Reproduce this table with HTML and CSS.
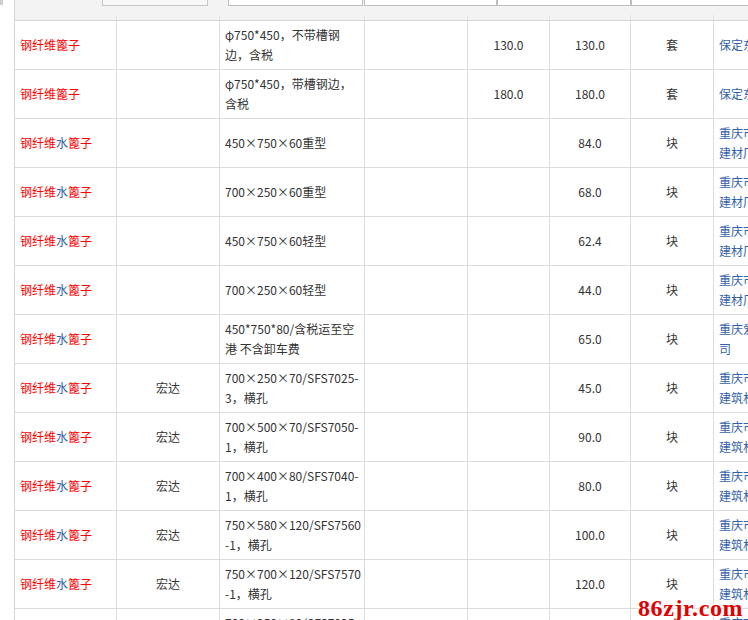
FILE: index.html
```html
<!DOCTYPE html>
<html lang="zh-CN">
<head>
<meta charset="utf-8">
<title>钢纤维篦子价格</title>
<link rel="stylesheet" href="styles.css">
</head>
<body>
<div class="page">
  <div class="gutter"><span class="nub"></span></div>
  <div class="sheet">
    <div class="toolbar">
      <div class="fields">
        <span class="btn"></span>
        <span class="field f1"></span>
        <span class="field f2"></span>
        <span class="field f3"></span>
        <span class="field f4"></span>
      </div>
      <div class="ticks cols">
        <span></span><span></span><span></span><span></span><span></span><span></span><span></span><span></span>
      </div>
    </div>
    <div class="rows cols">
      <div class="cell"><span class="name">钢纤维篦子</span></div>
      <div class="cell c"><span></span></div>
      <div class="cell spec"><span>φ750*450，不带槽钢<br>边，含税</span></div>
      <div class="cell"><span></span></div>
      <div class="cell c"><span>130.0</span></div>
      <div class="cell c"><span>130.0</span></div>
      <div class="cell c"><span>套</span></div>
      <div class="cell"><span class="link">保定东方建材有限公司</span></div>

      <div class="cell"><span class="name">钢纤维篦子</span></div>
      <div class="cell c"><span></span></div>
      <div class="cell spec"><span>φ750*450，带槽钢边，<br>含税</span></div>
      <div class="cell"><span></span></div>
      <div class="cell c"><span>180.0</span></div>
      <div class="cell c"><span>180.0</span></div>
      <div class="cell c"><span>套</span></div>
      <div class="cell"><span class="link">保定东方建材有限公司</span></div>

      <div class="cell"><span class="name">钢纤维<em class="blue">水</em>篦子</span></div>
      <div class="cell c"><span></span></div>
      <div class="cell spec"><span>450×750×60重型</span></div>
      <div class="cell"><span></span></div>
      <div class="cell c"><span></span></div>
      <div class="cell c"><span>84.0</span></div>
      <div class="cell c"><span>块</span></div>
      <div class="cell"><span class="link">重庆市沙坪坝区鑫源达建材厂</span></div>

      <div class="cell"><span class="name">钢纤维<em class="blue">水</em>篦子</span></div>
      <div class="cell c"><span></span></div>
      <div class="cell spec"><span>700×250×60重型</span></div>
      <div class="cell"><span></span></div>
      <div class="cell c"><span></span></div>
      <div class="cell c"><span>68.0</span></div>
      <div class="cell c"><span>块</span></div>
      <div class="cell"><span class="link">重庆市沙坪坝区鑫源达建材厂</span></div>

      <div class="cell"><span class="name">钢纤维<em class="blue">水</em>篦子</span></div>
      <div class="cell c"><span></span></div>
      <div class="cell spec"><span>450×750×60轻型</span></div>
      <div class="cell"><span></span></div>
      <div class="cell c"><span></span></div>
      <div class="cell c"><span>62.4</span></div>
      <div class="cell c"><span>块</span></div>
      <div class="cell"><span class="link">重庆市沙坪坝区鑫源达建材厂</span></div>

      <div class="cell"><span class="name">钢纤维<em class="blue">水</em>篦子</span></div>
      <div class="cell c"><span></span></div>
      <div class="cell spec"><span>700×250×60轻型</span></div>
      <div class="cell"><span></span></div>
      <div class="cell c"><span></span></div>
      <div class="cell c"><span>44.0</span></div>
      <div class="cell c"><span>块</span></div>
      <div class="cell"><span class="link">重庆市沙坪坝区鑫源达建材厂</span></div>

      <div class="cell"><span class="name">钢纤维<em class="blue">水</em>篦子</span></div>
      <div class="cell c"><span></span></div>
      <div class="cell spec"><span>450*750*80/含税运至空<br>港 不含卸车费</span></div>
      <div class="cell"><span></span></div>
      <div class="cell c"><span></span></div>
      <div class="cell c"><span>65.0</span></div>
      <div class="cell c"><span>块</span></div>
      <div class="cell"><span class="link">重庆爱思特建材有限公司</span></div>

      <div class="cell"><span class="name">钢纤维<em class="blue">水</em>篦子</span></div>
      <div class="cell c"><span>宏达</span></div>
      <div class="cell spec"><span>700×250×70/SFS7025-<br>3，横孔</span></div>
      <div class="cell"><span></span></div>
      <div class="cell c"><span></span></div>
      <div class="cell c"><span>45.0</span></div>
      <div class="cell c"><span>块</span></div>
      <div class="cell"><span class="link">重庆市璧山区宏达新型建筑材料有限公司</span></div>

      <div class="cell"><span class="name">钢纤维<em class="blue">水</em>篦子</span></div>
      <div class="cell c"><span>宏达</span></div>
      <div class="cell spec"><span>700×500×70/SFS7050-<br>1，横孔</span></div>
      <div class="cell"><span></span></div>
      <div class="cell c"><span></span></div>
      <div class="cell c"><span>90.0</span></div>
      <div class="cell c"><span>块</span></div>
      <div class="cell"><span class="link">重庆市璧山区宏达新型建筑材料有限公司</span></div>

      <div class="cell"><span class="name">钢纤维<em class="blue">水</em>篦子</span></div>
      <div class="cell c"><span>宏达</span></div>
      <div class="cell spec"><span>700×400×80/SFS7040-<br>1，横孔</span></div>
      <div class="cell"><span></span></div>
      <div class="cell c"><span></span></div>
      <div class="cell c"><span>80.0</span></div>
      <div class="cell c"><span>块</span></div>
      <div class="cell"><span class="link">重庆市璧山区宏达新型建筑材料有限公司</span></div>

      <div class="cell"><span class="name">钢纤维<em class="blue">水</em>篦子</span></div>
      <div class="cell c"><span>宏达</span></div>
      <div class="cell spec"><span>750×580×120/SFS7560<br>-1，横孔</span></div>
      <div class="cell"><span></span></div>
      <div class="cell c"><span></span></div>
      <div class="cell c"><span>100.0</span></div>
      <div class="cell c"><span>块</span></div>
      <div class="cell"><span class="link">重庆市璧山区宏达新型建筑材料有限公司</span></div>

      <div class="cell"><span class="name">钢纤维<em class="blue">水</em>篦子</span></div>
      <div class="cell c"><span>宏达</span></div>
      <div class="cell spec"><span>750×700×120/SFS7570<br>-1，横孔</span></div>
      <div class="cell"><span></span></div>
      <div class="cell c"><span></span></div>
      <div class="cell c"><span>120.0</span></div>
      <div class="cell c"><span>块</span></div>
      <div class="cell"><span class="link">重庆市璧山区宏达新型建筑材料有限公司</span></div>

      <div class="cell"><span class="name">钢纤维<em class="blue">水</em>篦子</span></div>
      <div class="cell c"><span>宏达</span></div>
      <div class="cell spec"><span>700×250×80/SFS7025-<br>2，横孔</span></div>
      <div class="cell"><span></span></div>
      <div class="cell c"><span></span></div>
      <div class="cell c"><span>50.0</span></div>
      <div class="cell c"><span>块</span></div>
      <div class="cell"><span class="link">重庆市璧山区宏达新型建筑材料有限公司</span></div>
    </div>
  </div>
</div>
<div class="watermark">86zjr.com</div>
</body>
</html>
```

FILE: styles.css
```css
html {
  overflow: hidden;
}

body {
  margin: 0;
  font-family: "Noto Sans CJK SC", sans-serif;
  font-size: 12px;
  line-height: 20px;
  color: #333;
  background: #fff;
}

.page {
  display: flex;
  width: 900px;
}

.gutter {
  flex: none;
  width: 14px;
}

.nub {
  display: block;
  width: 3px;
  height: 5px;
  background: #cfcfcf;
}

.sheet {
  flex: none;
  border-left: 1px solid #d6d6d6;
}

.cols {
  display: grid;
  grid-template-columns: 102px 103px 145px 103px 82px 81px 83px 140px;
}

.toolbar {
  height: 20px;
  background: #f3f3f3;
  border-bottom: 1px solid #d6d6d6;
}

.fields {
  display: flex;
  align-items: flex-start;
  height: 15px;
  padding-left: 87px;
}

.btn {
  width: 104px;
  height: 5px;
  background: #f8f8f8;
  border: 1px solid #c6c6c6;
  border-top: 0;
}

.field {
  height: 5px;
  background: #fff;
  border: 1px solid #bdbdbd;
  border-top: 0;
}

.f1 {
  width: 133px;
  margin-left: 20px;
}

.f2 {
  width: 131px;
  margin-left: 1px;
}

.f3 {
  width: 132px;
}

.f4 {
  width: 200px;
}

.ticks {
  height: 5px;
}

.ticks span {
  border-right: 1px solid #e2e2e2;
}

.cell {
  box-sizing: border-box;
  height: 49px;
  padding: 4px 5px;
  border-right: 1px solid #dcdcdc;
  border-bottom: 1px solid #dcdcdc;
  display: flex;
  align-items: center;
  overflow: hidden;
}

.c {
  justify-content: center;
}

.spec {
  white-space: nowrap;
}

.name {
  color: #f00;
}

.blue {
  font-style: normal;
  color: #3462a8;
}

.link {
  color: #3462a8;
}

.watermark {
  position: absolute;
  left: 638px;
  top: 596px;
  font-family: "Liberation Serif", serif;
  font-weight: bold;
  font-size: 24px;
  line-height: 24px;
  letter-spacing: 0.6px;
  color: #e00000;
  text-shadow: 1px 0 0 #fff, -1px 0 0 #fff, 0 1px 0 #fff, 0 -1px 0 #fff;
}
```
